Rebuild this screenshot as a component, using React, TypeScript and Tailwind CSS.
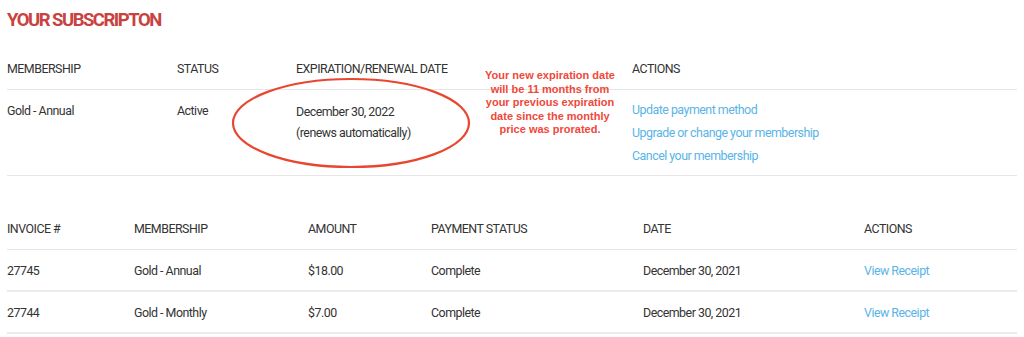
import React from "react";

const sans = { fontFamily: "Roboto, 'Liberation Sans', sans-serif" };

const invoices = [
  { id: "27745", plan: "Gold - Annual", amount: "$18.00", status: "Complete", date: "December 30, 2021" },
  { id: "27744", plan: "Gold - Monthly", amount: "$7.00", status: "Complete", date: "December 30, 2021" },
];

export default function App() {
  return (
    <div className="w-[1024px] h-[337px] overflow-hidden bg-white pl-[7px] pr-[7px] text-[12.4px] tracking-[-0.5px] text-[#333]" style={sans}>
      <h2 className="pt-[10px] text-[18.5px] leading-[20px] font-bold tracking-[-1.5px] text-[#c8423f]">YOUR SUBSCRIPTON</h2>

      {/* current membership */}
      <div className="relative mt-[29px]">
        <div className="grid grid-cols-[170px_119px_336px_1fr] border-b border-[#e6e6e6] pb-[10px] leading-[20px]">
          <div>MEMBERSHIP</div>
          <div>STATUS</div>
          <div>EXPIRATION/RENEWAL DATE</div>
          <div>ACTIONS</div>
        </div>
        <div className="grid grid-cols-[170px_119px_336px_1fr] border-b border-[#e6e6e6] pb-[7px]">
          <div className="pt-[11px] leading-[20px]">Gold - Annual</div>
          <div className="pt-[11px] leading-[20px]">Active</div>
          <div className="pt-[11px] leading-[21px]">
            <div>December 30, 2022</div>
            <div>(renews automatically)</div>
          </div>
          <div className="flex flex-col pt-[8px] pb-[1px] leading-[23px] text-[#5ab4e8]">
            <a href="#">Update payment method</a>
            <a href="#">Upgrade or change your membership</a>
            <a href="#">Cancel your membership</a>
          </div>
        </div>

        {/* annotation overlay */}
        <svg className="absolute left-[222px] top-[17px]" width="244" height="96" viewBox="0 0 244 96">
          <ellipse cx="122" cy="47" rx="118" ry="44" fill="none" stroke="#e8462f" strokeWidth="2.2" />
        </svg>
        <p
          className="absolute left-[478px] top-[10px] w-[130px] text-center text-[11px] leading-[13.6px] font-bold tracking-normal text-[#f0483a]"
          style={{ fontFamily: "'Liberation Sans', Arial, sans-serif" }}
        >
          Your new expiration date will be 11 months from your previous expiration date since the monthly price was prorated.
        </p>
      </div>

      {/* invoices */}
      <div className="mt-[43px]">
        <div className="grid grid-cols-[127px_174px_123px_212px_221px_1fr] border-b border-[#e6e6e6] pb-[10px] leading-[20px]">
          <div>INVOICE #</div>
          <div>MEMBERSHIP</div>
          <div>AMOUNT</div>
          <div>PAYMENT STATUS</div>
          <div>DATE</div>
          <div>ACTIONS</div>
        </div>
        {invoices.map((inv) => (
          <div
            key={inv.id}
            className="grid h-[42px] grid-cols-[127px_174px_123px_212px_221px_1fr] items-center border-b-2 border-[#ececec] pt-[1px] leading-[20px]"
          >
            <div>{inv.id}</div>
            <div>{inv.plan}</div>
            <div>{inv.amount}</div>
            <div>{inv.status}</div>
            <div>{inv.date}</div>
            <a href="#" className="text-[#5ab4e8]">View Receipt</a>
          </div>
        ))}
      </div>
    </div>
  );
}
